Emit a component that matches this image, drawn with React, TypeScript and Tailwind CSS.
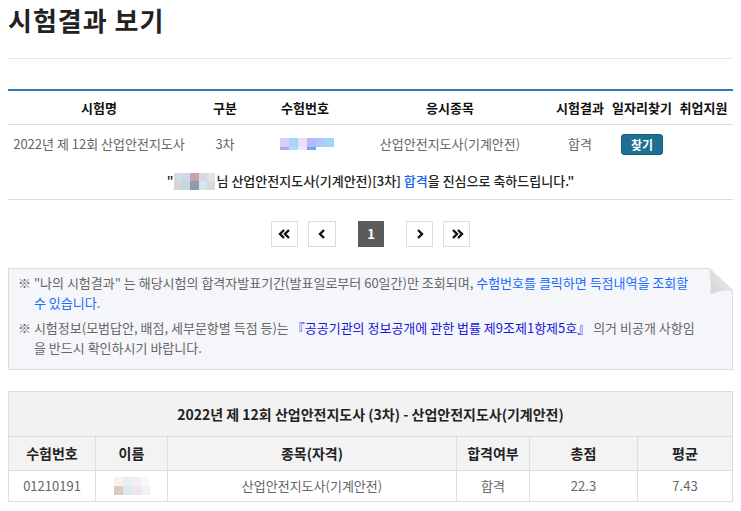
import React from "react";

const examBlurTop = ["#dccbfb", "#a9d3fb", "#efdcfc", "#b3b9fb", "#a5cdfb", "#a3d5fc"];
const examBlurBottom = ["#b9a3f9", "#b2dcfb", "#f3e4fc", "#63aaf2", "#ffffff", "#ffffff"];
const congBlurTop = ["#cfdcea", "#c9d9e9", "#c8a2a8", "#d9d5e7", "#e3e3e3"];
const congBlurBottom = ["#d6d6d6", "#cad4de", "#8b9ba9", "#d3e4f2", "#dadada"];
const nameBlurTop = ["#fcefe3", "#e6edf3", "#f1eff1", "#f5f8fb"];
const nameBlurBottom = ["#d8cbc3", "#dce8ef", "#ece6e6", "#eef2f6"];

function Chevron({ double, dir }: { double?: boolean; dir: "left" | "right" }) {
  const single = dir === "left" ? "7,2 3,6 7,10" : "3,2 7,6 3,10";
  return (
    <svg width={double ? 14 : 10} height="12" viewBox={double ? "0 0 14 12" : "0 0 10 12"}>
      {double ? (
        dir === "left" ? (
          <>
            <polyline points="6,2 2,6 6,10" fill="none" stroke="#111" strokeWidth="2.4" />
            <polyline points="11,2 7,6 11,10" fill="none" stroke="#111" strokeWidth="2.4" />
          </>
        ) : (
          <>
            <polyline points="3,2 7,6 3,10" fill="none" stroke="#111" strokeWidth="2.4" />
            <polyline points="8,2 12,6 8,10" fill="none" stroke="#111" strokeWidth="2.4" />
          </>
        )
      ) : (
        <polyline points={single} fill="none" stroke="#111" strokeWidth="2.4" />
      )}
    </svg>
  );
}

export default function App() {
  return (
    <div className="font-['Noto_Sans_CJK_KR','Noto_Sans',sans-serif] bg-white w-[741px] h-[511px] overflow-hidden px-2 text-[13px]">
      {/* Title */}
      <h1 className="h-[40px] leading-[40px] text-[26px] font-bold text-[#222] tracking-[1px]">시험결과 보기</h1>
      <div className="mt-[18px] border-t border-[#e8e8e8]" />

      {/* Top table */}
      <div className="mt-[30px] border-t-2 border-[#337ab7]">
        <div className="grid grid-cols-[182px_70px_90px_200px_60px_64px_59px] h-[34px] items-center text-center font-bold text-[#111] border-b border-[#ddd] whitespace-nowrap">
          <div>시험명</div>
          <div>구분</div>
          <div>수험번호</div>
          <div>응시종목</div>
          <div>시험결과</div>
          <div>일자리찾기</div>
          <div>취업지원</div>
        </div>
        <div className="grid grid-cols-[182px_70px_90px_200px_60px_64px_59px] h-[38px] items-center text-center text-[#666] whitespace-nowrap">
          <div>2022년 제 12회 산업안전지도사</div>
          <div>3차</div>
          <div className="flex justify-center">
            <div className="ml-[4px] flex flex-col">
              <div className="flex">
                {examBlurTop.map((c, i) => (
                  <div key={i} className="w-[9px] h-[9px]" style={{ background: c }} />
                ))}
              </div>
              <div className="flex">
                {examBlurBottom.map((c, i) => (
                  <div key={i} className="w-[9px] h-[3px]" style={{ background: c }} />
                ))}
              </div>
            </div>
          </div>
          <div>산업안전지도사(기계안전)</div>
          <div>합격</div>
          <div className="flex justify-center">
            <button className="w-[42px] h-[21px] rounded-[3px] bg-[#1d6f94] border border-[#175d7d] text-white font-bold text-[12px] leading-[19px]">
              찾기
            </button>
          </div>
          <div />
        </div>
        <div className="h-[37px] flex items-center justify-center border-b border-[#ddd] text-[#222] font-medium whitespace-nowrap">
          <span>"</span>
          <span className="inline-grid grid-cols-5 w-[42px] h-[17px] mr-[1px]">
            {[...congBlurTop, ...congBlurBottom].map((c, i) => (
              <span key={i} className="block" style={{ background: c }} />
            ))}
          </span>
          <span>님 산업안전지도사(기계안전)[3차] </span>
          <span className="text-[#1166ee] ml-[3px]">합격</span>
          <span>을 진심으로 축하드립니다."</span>
        </div>
      </div>

      {/* Pagination */}
      <div className="mt-[21px] flex justify-center items-center">
        <div className="w-[27px] h-[26px] border border-[#ddd] flex items-center justify-center">
          <Chevron double dir="left" />
        </div>
        <div className="ml-[10px] w-[28px] h-[26px] border border-[#ddd] flex items-center justify-center">
          <Chevron dir="left" />
        </div>
        <div className="ml-[22px] w-[26px] h-[26px] bg-[#5b5b5b] text-white font-bold flex items-center justify-center">
          1
        </div>
        <div className="ml-[22px] w-[27px] h-[26px] border border-[#ddd] flex items-center justify-center">
          <Chevron dir="right" />
        </div>
        <div className="ml-[10px] w-[27px] h-[26px] border border-[#ddd] flex items-center justify-center">
          <Chevron double dir="right" />
        </div>
      </div>

      {/* Notice */}
      <div className="relative mt-[21px] h-[102px] border border-[#ddd] bg-[#f5f6fa] px-[9px] pt-[4px] text-[#666] leading-[20px]">
        <p className="pl-4 -indent-4 whitespace-nowrap">
          ※ "나의 시험결과" 는 해당시험의 합격자발표기간(발표일로부터 60일간)만 조회되며,{" "}
          <span className="text-[#1a6cff]">수험번호를 클릭하면 득점내역을 조회할</span>
          <br />
          <span className="text-[#1a6cff]">수 있습니다.</span>
        </p>
        <p className="mt-[5px] pl-4 -indent-4 whitespace-nowrap">
          ※ 시험정보(모범답안, 배점, 세부문항별 득점 등)는{" "}
          <span className="text-[#1818dd]">『공공기관의 정보공개에 관한 법률 제9조제1항제5호』</span> 의거 비공개 사항임
          <br />을 반드시 확인하시기 바랍니다.
        </p>
        <svg className="absolute -top-[1px] -right-[1px]" width="24" height="27" viewBox="0 0 24 27">
          <defs>
            <linearGradient id="fold" x1="0" y1="1" x2="1" y2="0">
              <stop offset="0" stopColor="#d2d2d2" />
              <stop offset="1" stopColor="#f0f0f0" />
            </linearGradient>
          </defs>
          <polygon points="0,0 24,0 24,22" fill="#ffffff" />
          <path d="M0.5 0.5 L23.5 22 Q12 21 2 26 Q2.5 12 0.5 0.5 Z" fill="url(#fold)" stroke="#dcdcdc" strokeWidth="0.8" />
          <line x1="23.5" y1="22" x2="23.5" y2="27" stroke="#ddd" strokeWidth="1" />
        </svg>
      </div>

      {/* Bottom table */}
      <div className="mt-[21px] border border-[#ddd] whitespace-nowrap">
        <div className="h-[45px] bg-[#f2f2f2] flex items-center justify-center font-bold text-[14px] text-[#222] border-b border-[#ddd]">
          2022년 제 12회 산업안전지도사 (3차) - 산업안전지도사(기계안전)
        </div>
        <div className="grid grid-cols-[86px_72px_289px_73px_108px_95px] h-[34px] bg-[#f3f3f3] border-b border-[#ddd] font-bold text-[14px] text-[#222] text-center">
          <div className="flex items-center justify-center">수험번호</div>
          <div className="flex items-center justify-center border-l border-[#ddd]">이름</div>
          <div className="flex items-center justify-center border-l border-[#ddd]">종목(자격)</div>
          <div className="flex items-center justify-center border-l border-[#ddd]">합격여부</div>
          <div className="flex items-center justify-center border-l border-[#ddd]">총점</div>
          <div className="flex items-center justify-center border-l border-[#ddd]">평균</div>
        </div>
        <div className="grid grid-cols-[86px_72px_289px_73px_108px_95px] h-[30px] text-[#666] text-center">
          <div className="flex items-center justify-center">01210191</div>
          <div className="flex items-center justify-center border-l border-[#ddd]">
            <span className="grid grid-cols-4 w-[36px] h-[18px]">
              {[...nameBlurTop, ...nameBlurBottom].map((c, i) => (
                <span key={i} className="block" style={{ background: c }} />
              ))}
            </span>
          </div>
          <div className="flex items-center justify-center border-l border-[#ddd]">산업안전지도사(기계안전)</div>
          <div className="flex items-center justify-center border-l border-[#ddd]">합격</div>
          <div className="flex items-center justify-center border-l border-[#ddd]">22.3</div>
          <div className="flex items-center justify-center border-l border-[#ddd]">7.43</div>
        </div>
      </div>
    </div>
  );
}
